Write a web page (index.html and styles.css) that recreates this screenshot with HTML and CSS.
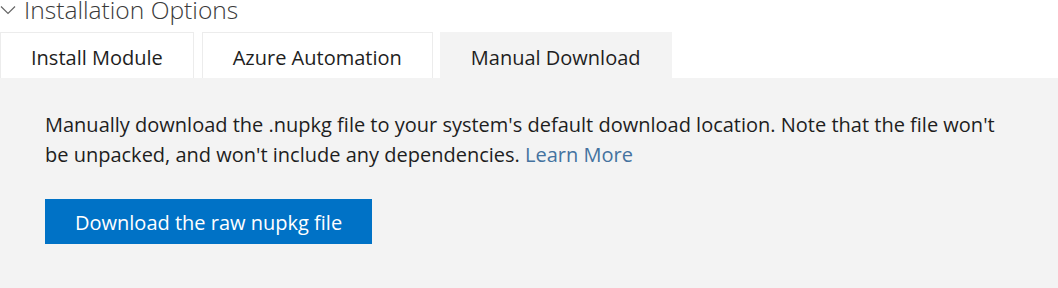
FILE: index.html
```html
<!DOCTYPE html>
<html lang="en">
<head>
<meta charset="utf-8">
<title>Installation Options</title>
<link rel="stylesheet" href="styles.css">
</head>
<body>
<section class="install">
  <h2 class="install-title">
    <svg class="chevron" width="16" height="10" viewBox="0 0 16 10" aria-hidden="true"><path d="M1 1.5 L8 8.5 L15 1.5" fill="none" stroke="#666" stroke-width="1.2"/></svg>
    <span>Installation Options</span>
  </h2>
  <ul class="tabs">
    <li class="tab">Install Module</li>
    <li class="tab">Azure Automation</li>
    <li class="tab tab-active">Manual Download</li>
  </ul>
  <div class="panel">
    <p class="panel-text">Manually download the .nupkg file to your system's default download location. Note that the file won't be unpacked, and won't include any dependencies. <a class="link" href="#">Learn More</a></p>
    <a class="btn" href="#">Download the raw nupkg file</a>
  </div>
</section>
</body>
</html>
```
FILE: styles.css
```css
html, body {
  margin: 0;
  padding: 0;
  background: #ffffff;
}
body {
  font-family: "Open Sans", "Noto Sans", sans-serif;
  color: #1e1e1e;
  overflow: hidden;
}
.install-title {
  margin: 0 0 8px 0;
  height: 24px;
  display: flex;
  align-items: flex-start;
  font-size: 24.6px;
  font-weight: 300;
  line-height: 19px;
  color: #3a3a3a;
}
.chevron {
  margin: 5px 8px 0 0;
  flex: none;
}
.tabs {
  list-style: none;
  margin: 0;
  padding: 0;
  display: flex;
  gap: 8px;
}
.tab {
  height: 45px;
  box-sizing: border-box;
  height: 46px;
  padding: 4px 30px 0 30px;
  line-height: 41px;
  border: 1px solid #ececec;
  border-bottom: none;
  font-size: 20px;
  color: #1e1e1e;
  background: #ffffff;
}
.tab-active {
  background: #f3f3f3;
  border-color: #f3f3f3;
  margin-left: -1px;
}
.panel {
  background: #f3f3f3;
  padding: 32px 45px 44px 45px;
}
.panel-text {
  margin: 0 0 29px 0;
  font-size: 20px;
  line-height: 30px;
}
.link {
  color: #44729f;
  text-decoration: none;
}
.btn {
  display: inline-block;
  box-sizing: border-box;
  height: 45px;
  padding: 2px 30px 0 30px;
  line-height: 43px;
  background: #0072c6;
  color: #ffffff;
  font-size: 20px;
  text-decoration: none;
}
```
